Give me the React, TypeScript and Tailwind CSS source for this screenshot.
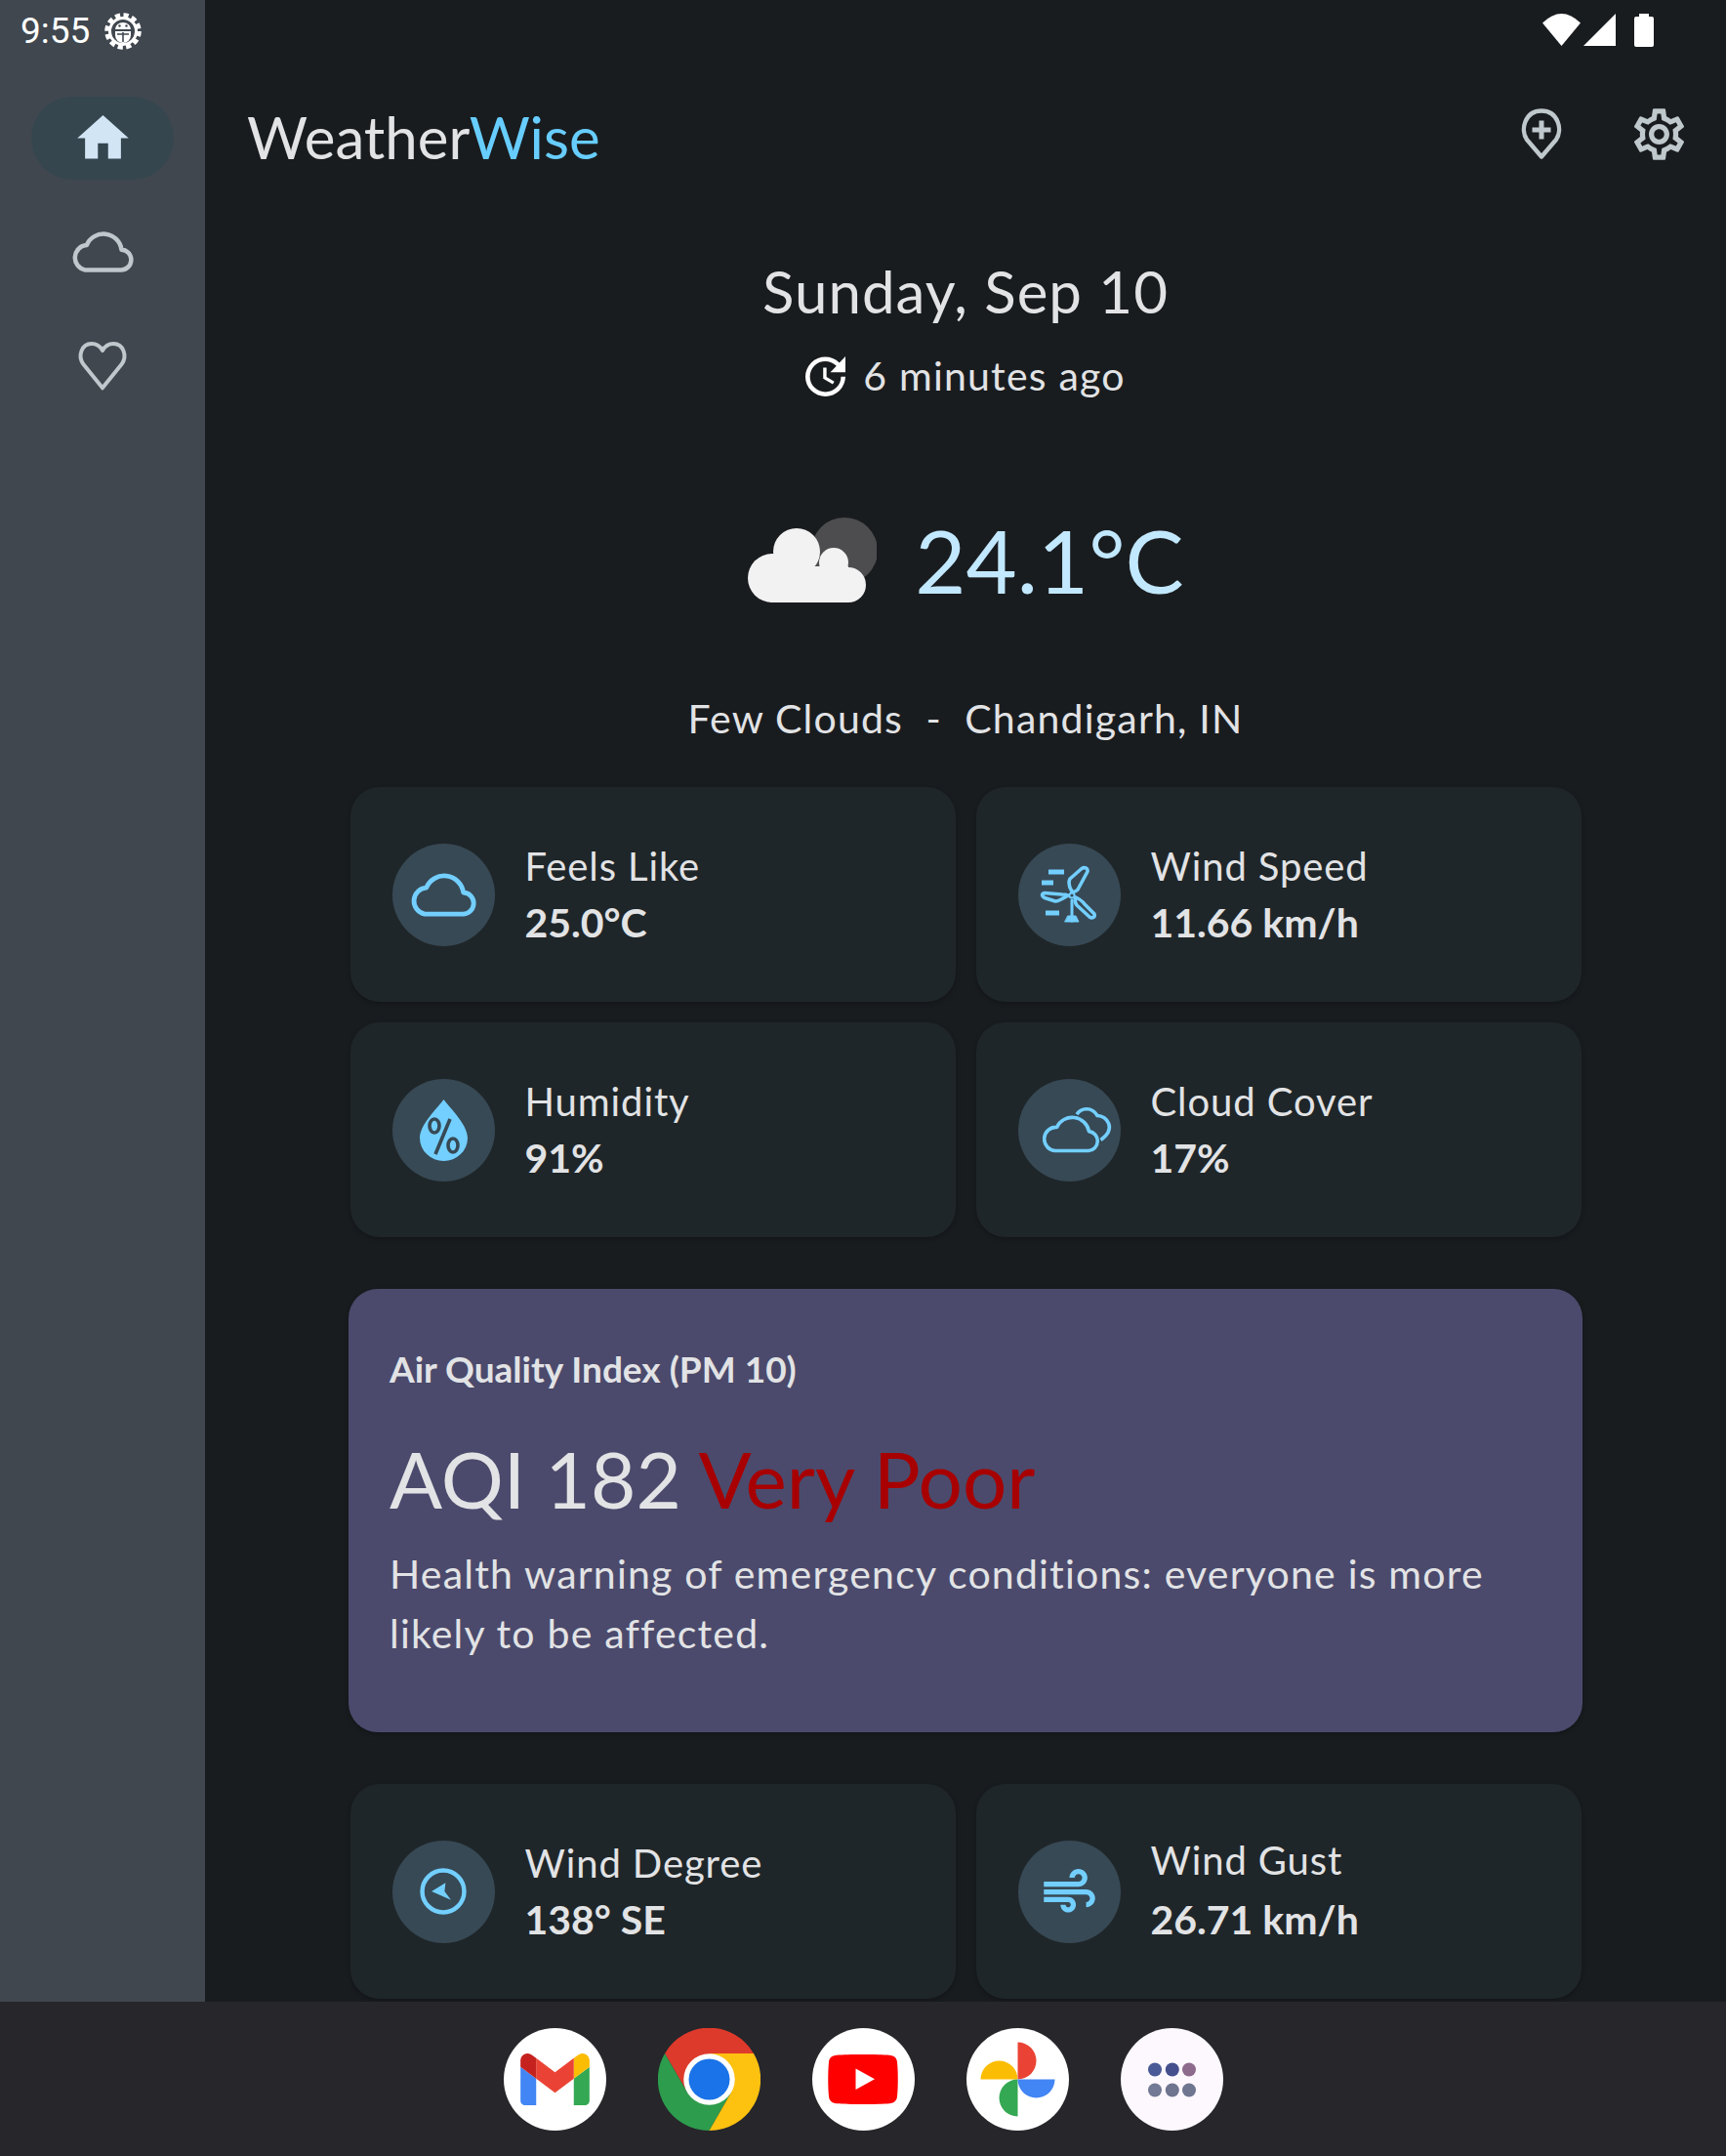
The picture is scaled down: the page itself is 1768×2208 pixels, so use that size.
import React from "react";

const FONT = "font-['Lato','Noto_Sans',sans-serif]";

function CloudOutline({ className, sw = 1.7 }: { className: string; sw?: number }) {
  return (
    <svg viewBox="0 0 24 16" className={className} fill="none" stroke="currentColor" strokeWidth={sw} strokeLinejoin="round">
      <path d="M5.3 15.1H18.9A3.9 3.9 0 0 0 19.3 7.3 7 7 0 0 0 5.9 5.6 4.8 4.8 0 0 0 5.3 15.1Z" />
    </svg>
  );
}

function BugGear() {
  return (
    <svg viewBox="0 0 38 38" className="w-[38px] h-[38px]" fill="none" stroke="#fff">
      <circle cx="19" cy="19" r="16.5" strokeWidth="4.5" strokeDasharray="5.2 3.44" />
      <circle cx="19" cy="19" r="13.5" strokeWidth="3" />
      <path d="M11 17A8 7 0 0 1 27 17Z" fill="#fff" stroke="none" />
      <circle cx="15.5" cy="13.5" r="1.2" fill="#40474f" stroke="none" />
      <circle cx="22.5" cy="13.5" r="1.2" fill="#40474f" stroke="none" />
      <path d="M11 19H27V23A8 8 0 0 1 11 23Z" fill="#fff" stroke="none" />
      <path d="M13 22H25M19 20V30" stroke="#40474f" strokeWidth="1.6" />
    </svg>
  );
}

function FeelsIcon() {
  return <CloudOutline className="w-[68px] h-[48px] text-[#73cfff]" />;
}

function TurbineIcon() {
  return (
    <svg viewBox="0 0 60 60" className="w-[60px] h-[60px]" fill="none" stroke="#73cfff" strokeWidth="3.6" strokeLinejoin="round" strokeLinecap="round">
      <path d="M33 27C30 22 29 18 31 14L43 3.5C46 1.5 49.5 3 49 6.5L39 25C37 27 35 28 33 27Z" />
      <path d="M29 31C24 34 20 37 16 37L5 33.5C1.5 31.5 2 29 5 28.5L23 30C26 30 28 30.5 29 31Z" />
      <path d="M37 33C41 35 44 37 46 40L56 50C57 53 54 55 51 53L38 41C36 38 36 35 37 33Z" />
      <path d="M33 36V57" strokeWidth="3" />
      <path d="M26 58H40L37 52H29Z" fill="#73cfff" strokeWidth="1" />
      <circle cx="33" cy="31" r="2.6" strokeWidth="2" />
      <path d="M9 7H25M2 18H14M6 49H20" strokeWidth="5" strokeLinecap="butt" />
    </svg>
  );
}

function DropIcon() {
  return (
    <svg viewBox="0 0 49 63" className="w-[49px] h-[63px]">
      <path d="M24.5 0C32 10 49 26 49 39.5A24.5 23.5 0 0 1 0 39.5C0 26 17 10 24.5 0Z" fill="#73cfff" />
      <g fill="none" stroke="#374955" strokeWidth="3.6">
        <ellipse cx="15" cy="27" rx="5" ry="7" />
        <ellipse cx="34" cy="47" rx="5" ry="7" />
        <path d="M31 20L16 56" />
      </g>
    </svg>
  );
}

function CloudsIcon() {
  return (
    <svg viewBox="0 0 74 48" className="w-[74px] h-[48px] ml-[20px]" fill="none" stroke="#73cfff" strokeWidth="3.6" strokeLinejoin="round">
      <path d="M13 45.5H47A10 10 0 0 0 47.5 25.6 17.5 17.5 0 0 0 14.5 21.4 12 12 0 0 0 13 45.5Z" />
      <path d="M35 8.2C39 2 50 -0.5 56 9.5C66 9.5 76 23 59.5 34.5" strokeLinecap="butt" />
    </svg>
  );
}

function CompassIcon() {
  return (
    <svg viewBox="0 0 24 24" className="w-[56px] h-[56px]">
      <circle cx="12" cy="12" r="9.2" fill="none" stroke="#73cfff" strokeWidth="1.9" />
      <path d="M6.9 12L13 8.2L12.6 12L15.4 15.7Z" fill="#73cfff" />
    </svg>
  );
}

function AirIcon() {
  return (
    <svg viewBox="0 0 24 24" className="w-[63px] h-[63px]" fill="#73cfff">
      <path d="M14.5 17c0 1.65-1.35 3-3 3s-3-1.35-3-3h2c0 .55.45 1 1 1s1-.45 1-1-.45-1-1-1H2v-2h9.5c1.65 0 3 1.35 3 3zM19 6.5C19 4.57 17.43 3 15.5 3S12 4.57 12 6.5h2c0-.83.67-1.5 1.5-1.5s1.5.67 1.5 1.5S16.33 8 15.5 8H2v2h13.5c1.93 0 3.5-1.57 3.5-3.5zm-.5 4.5H2v2h16.5c.83 0 1.5.67 1.5 1.5s-.67 1.5-1.5 1.5v2c1.93 0 3.5-1.57 3.5-3.5S20.43 11 18.5 11z" />
    </svg>
  );
}

function StatCard({ icon, label, value, labelClass = "" }: { icon: React.ReactNode; label: string; value: string; labelClass?: string }) {
  return (
    <div className="h-[220px] rounded-[30px] bg-[#1f2629] shadow-[0_2px_4px_rgba(0,0,0,0.25)] flex items-center pl-[43px] gap-[31px]">
      <div className="w-[105px] h-[105px] rounded-full bg-[#374955] flex items-center justify-center shrink-0">{icon}</div>
      <div className="flex flex-col text-[#e2e3e5]">
        <span className={`text-[40px] leading-[58px] tracking-[0.9px] ${labelClass}`}>{label}</span>
        <span className="text-[41px] leading-[58px] font-bold">{value}</span>
      </div>
    </div>
  );
}

function Dock() {
  return (
    <div className="h-[158px] bg-[#26262b] flex items-center justify-center gap-[53px] shrink-0">
      <div className="w-[105px] h-[105px] rounded-full bg-white flex items-center justify-center">
        <svg viewBox="52 42 88 66" className="w-[71px] h-[53px]">
          <path fill="#4285f4" d="M58 108h14V74L52 59v43c0 3.32 2.69 6 6 6" />
          <path fill="#34a853" d="M120 108h14c3.32 0 6-2.69 6-6V59l-20 15" />
          <path fill="#fbbc04" d="M120 48v26l20-15v-8c0-7.42-8.47-11.65-14.4-7.2" />
          <path fill="#ea4335" d="M72 74V48l24 18 24-18v26L96 92" />
          <path fill="#c5221f" d="M52 51v8l20 15V48l-5.6-4.2c-5.94-4.45-14.4-.22-14.4 7.2" />
        </svg>
      </div>
      <svg viewBox="0 0 105 105" className="w-[105px] h-[105px]">
        <path fill="#de3a2b" d="M7 26A52.5 52.5 0 0 1 98 26H52.5L29.8 65.6Z" />
        <path fill="#2d9c4d" d="M7 26A52.5 52.5 0 0 0 52.5 105L75.2 65.6H29.8Z" />
        <path fill="#fdc110" d="M98 26A52.5 52.5 0 0 1 52.5 105L75.2 65.6L52.5 26Z" />
        <circle cx="52.5" cy="52.5" r="26.25" fill="#fff" />
        <circle cx="52.5" cy="52.5" r="21" fill="#1a73e8" />
      </svg>
      <div className="w-[105px] h-[105px] rounded-full bg-white flex items-center justify-center">
        <svg viewBox="0 0 72 51" className="w-[72px] h-[51px]">
          <path fill="#ff0000" d="M9 .8C20 -.2 52 -.2 63 .8C68 1.3 70.6 3.5 71 8C72 17 72 34 71 43C70.6 47.5 68 49.7 63 50.2C52 51.2 20 51.2 9 50.2C4 49.7 1.4 47.5 1 43C0 34 0 17 1 8C1.4 3.5 4 1.3 9 .8Z" />
          <path fill="#fff" d="M28.5 14.5V36L48 25.2Z" />
        </svg>
      </div>
      <div className="w-[105px] h-[105px] rounded-full bg-white">
        <svg viewBox="0 0 105 105" className="w-[105px] h-[105px]">
          <path fill="#ea4335" d="M52.5 14.5A19 19 0 0 1 52.5 52.5Z" />
          <path fill="#fbbc04" d="M14.5 52.5A19 19 0 0 1 52.5 52.5Z" />
          <path fill="#34a853" d="M52.5 90.5A19 19 0 0 1 52.5 52.5Z" />
          <path fill="#4285f4" d="M90.5 52.5A19 19 0 0 1 52.5 52.5Z" />
        </svg>
      </div>
      <div className="w-[105px] h-[105px] rounded-full bg-[#fdf8fd]">
        <svg viewBox="0 0 105 105" className="w-[105px] h-[105px]">
          <circle cx="35" cy="42.5" r="7" fill="#4a5a96" />
          <circle cx="52.8" cy="42.5" r="7" fill="#454f8e" />
          <circle cx="70" cy="42.5" r="7" fill="#8d6b8c" />
          <circle cx="35" cy="63.5" r="7" fill="#737a95" />
          <circle cx="52.8" cy="63.5" r="7" fill="#6f748f" />
          <circle cx="70" cy="63.5" r="7" fill="#6f7690" />
        </svg>
      </div>
    </div>
  );
}

export default function App() {
  return (
    <div className={`w-[1768px] h-[2208px] flex flex-col overflow-hidden bg-[#191c1f] ${FONT}`}>
      <div className="flex flex-1 min-h-0">
        {/* Navigation rail */}
        <aside className="w-[210px] bg-[#40474f] shrink-0 flex flex-col items-center">
          <div className="w-full h-[64px] flex items-center pl-[21px] gap-[15px] font-['Roboto',sans-serif] text-[37px] text-white">
            <span>9:55</span>
            <BugGear />
          </div>
          <div className="mt-[35px] w-[146px] h-[85px] rounded-[42px] bg-[#36464f] flex items-center justify-center">
            <svg viewBox="0 0 24 24" className="w-[63px] h-[63px]" fill="#d2e5f5">
              <path d="M10 20v-6h4v6h5v-8h3L12 3 2 12h3v8z" />
            </svg>
          </div>
          <CloudOutline className="mt-[52px] w-[64px] h-[43px] text-[#bfc8cc]" />
          <svg viewBox="0 0 24 24" className="mt-[67px] w-[56px] h-[56px] text-[#bfc8cc]" fill="none" stroke="currentColor" strokeWidth="1.7" strokeLinejoin="round">
            <path d="M12 22L3.6 11.6C1 8 2.8 2.6 7.2 2.6C9.4 2.6 11 3.8 12 5.6C13 3.8 14.6 2.6 16.8 2.6C21.2 2.6 23 8 20.4 11.6Z" />
          </svg>
        </aside>

        {/* Main column */}
        <main className="flex-1 min-w-0 overflow-hidden flex flex-col">
          <div className="h-[64px] flex items-start justify-end pt-[14px] pr-[74px] shrink-0">
            <svg viewBox="0 0 39 33" className="w-[39px] h-[33px]" fill="#fff">
              <path d="M19.5 33L0 9.5Q19.5 -9.5 39 9.5Z" />
            </svg>
            <svg viewBox="0 0 33 33" className="w-[33px] h-[33px] ml-[3px]" fill="#fff">
              <path d="M0 33L33 0V33Z" />
            </svg>
            <svg viewBox="0 0 20 34" className="w-[20px] h-[34px] ml-[19px]" fill="#fff">
              <path d="M5 0H15V3H18Q20 3 20 5V32Q20 34 18 34H2Q0 34 0 32V5Q0 3 2 3H5Z" />
            </svg>
          </div>

          <header className="h-[152px] shrink-0 flex items-center pl-[43px] pr-[37px]">
            <h1 className="text-[60px] leading-none font-normal text-[#e2e3e5]">
              Weather<span className="text-[#67cdff]">Wise</span>
            </h1>
            <svg viewBox="0 0 42 52" className="ml-auto w-[42px] h-[52px] -translate-y-[3px]" fill="none" stroke="#bfc8cc">
              <path d="M21 49.5L6 32C-1 22 4 2.5 21 2.5S43 22 36 32Z" strokeWidth="4.4" strokeLinejoin="round" />
              <path d="M21 12.5V31.5M11.5 22H30.5" strokeWidth="5" />
            </svg>
            <svg viewBox="0 0 24 24" className="ml-[68px] w-[63px] h-[63px] -translate-y-[3px]" fill="#bfc8cc">
              <path d="M19.43 12.98c.04-.32.07-.64.07-.98 0-.34-.03-.66-.07-.98l2.11-1.65c.19-.15.24-.42.12-.64l-2-3.46c-.09-.16-.26-.25-.44-.25-.06 0-.12.01-.17.03l-2.49 1c-.52-.4-1.08-.73-1.69-.98l-.38-2.65C14.46 2.18 14.25 2 14 2h-4c-.25 0-.46.18-.49.42l-.38 2.65c-.61.25-1.17.59-1.69.98l-2.49-1c-.06-.02-.12-.03-.18-.03-.17 0-.34.09-.43.25l-2 3.46c-.13.22-.07.49.12.64l2.11 1.65c-.04.32-.07.65-.07.98 0 .33.03.66.07.98l-2.11 1.65c-.19.15-.24.42-.12.64l2 3.46c.09.16.26.25.44.25.06 0 .12-.01.17-.03l2.49-1c.52.4 1.08.73 1.69.98l.38 2.65c.03.24.24.42.49.42h4c.25 0 .46-.18.49-.42l.38-2.65c.61-.25 1.17-.59 1.69-.98l2.49 1c.06.02.12.03.18.03.17 0 .34-.09.43-.25l2-3.46c.12-.22.07-.49-.12-.64l-2.11-1.65zm-1.98-1.71c.04.31.05.52.05.73 0 .21-.02.43-.05.73l-.14 1.13.89.7 1.08.84-.7 1.21-1.27-.51-1.04-.42-.9.68c-.43.32-.84.56-1.25.73l-1.06.43-.16 1.13-.2 1.35h-1.4l-.19-1.35-.16-1.13-1.06-.43c-.43-.18-.83-.41-1.23-.71l-.91-.7-1.06.43-1.27.51-.7-1.21 1.08-.84.89-.7-.14-1.13c-.03-.31-.05-.54-.05-.74s.02-.43.05-.73l.14-1.13-.89-.7-1.08-.84.7-1.21 1.27.51 1.04.42.9-.68c.43-.32.84-.56 1.25-.73l1.06-.43.16-1.13.2-1.35h1.39l.19 1.35.16 1.13 1.06.43c.43.18.83.41 1.23.71l.91.7 1.06-.43 1.27-.51.7 1.21-1.07.85-.89.7.14 1.13zM12 8c-2.21 0-4 1.79-4 4s1.79 4 4 4 4-1.79 4-4-1.79-4-4-4zm0 6c-1.1 0-2-.9-2-2s.9-2 2-2 2 .9 2 2-.9 2-2 2z" />
            </svg>
          </header>

          <div className="mt-[47px] text-center text-[60px] leading-[70px] tracking-[1px] text-[#e2e3e5] shrink-0">Sunday, Sep 10</div>

          <div className="mt-[27px] h-[50px] flex items-center justify-center shrink-0 gap-[18px] text-[41px] tracking-[1.2px] text-[#e2e3e5]">
            <svg viewBox="3 3 18 18" className="w-[41px] h-[41px]" fill="#fff">
              <path d="M21 10.12h-6.78l2.74-2.82c-2.73-2.7-7.15-2.8-9.88-.1-2.73 2.71-2.73 7.08 0 9.79s7.15 2.71 9.88 0C18.32 15.65 19 14.08 19 12.1h2c0 1.98-.88 4.55-2.64 6.29-3.51 3.48-9.21 3.48-12.72 0-3.5-3.47-3.53-9.11-.02-12.58s9.14-3.47 12.65 0L21 3v7.12zM12.5 8v4.25l3.5 2.08-.72 1.21L11 13V8h1.5z" />
            </svg>
            <span>6 minutes ago</span>
          </div>

          <div className="mt-[113px] h-[100px] flex items-center justify-center gap-[39px] shrink-0">
            <svg viewBox="0 0 133 87" className="w-[133px] h-[87px]">
              <circle cx="100" cy="34" r="34" fill="#4d4d4f" />
              <g fill="#f2f2f2">
                <circle cx="51" cy="35" r="24" />
                <circle cx="89" cy="46" r="15" />
                <circle cx="26" cy="62" r="25" />
                <circle cx="104" cy="69" r="18" />
                <rect x="24" y="50" width="80" height="37" />
              </g>
            </svg>
            <span className="text-[90px] leading-none text-[#c2e8ff]">24.1°C</span>
          </div>

          <div className="mt-[88px] h-[50px] flex items-center justify-center text-[41px] tracking-[1.2px] whitespace-pre text-[#e2e3e5] shrink-0">
            Few Clouds  -  Chandigarh, IN
          </div>

          <div className="mt-[45px] w-[1261px] self-center grid grid-cols-2 gap-[21px] shrink-0">
            <StatCard icon={<FeelsIcon />} label="Feels Like" value="25.0°C" />
            <StatCard icon={<TurbineIcon />} label="Wind Speed" value="11.66 km/h" />
            <StatCard icon={<DropIcon />} label="Humidity" value="91%" />
            <StatCard icon={<CloudsIcon />} label="Cloud Cover" value="17%" />
          </div>

          <section className="mt-[53px] w-[1264px] h-[454px] self-center shrink-0 rounded-[30px] bg-[#4b4a6c] shadow-[0_2px_4px_rgba(0,0,0,0.25)] pt-[60px] pl-[42px] pr-[40px] text-[#e2e3e5]">
            <h2 className="text-[37px] leading-[44px] font-bold">Air Quality Index (PM 10)</h2>
            <div className="mt-[42px] text-[80px] leading-[96px]">
              AQI 182 <span className="text-[#a80000]">Very Poor</span>
            </div>
            <p className="mt-[20px] text-[41px] leading-[60.5px] tracking-[1.2px]">
              Health warning of emergency conditions: everyone is more likely to be affected.
            </p>
          </section>

          <div className="mt-[53px] w-[1261px] self-center grid grid-cols-2 gap-[21px] shrink-0">
            <StatCard icon={<CompassIcon />} label="Wind Degree" value="138° SE" />
            <StatCard icon={<AirIcon />} label="Wind Gust" value="26.71 km/h" labelClass="-mt-[3px] mb-[3px]" />
          </div>
        </main>
      </div>
      <Dock />
    </div>
  );
}
